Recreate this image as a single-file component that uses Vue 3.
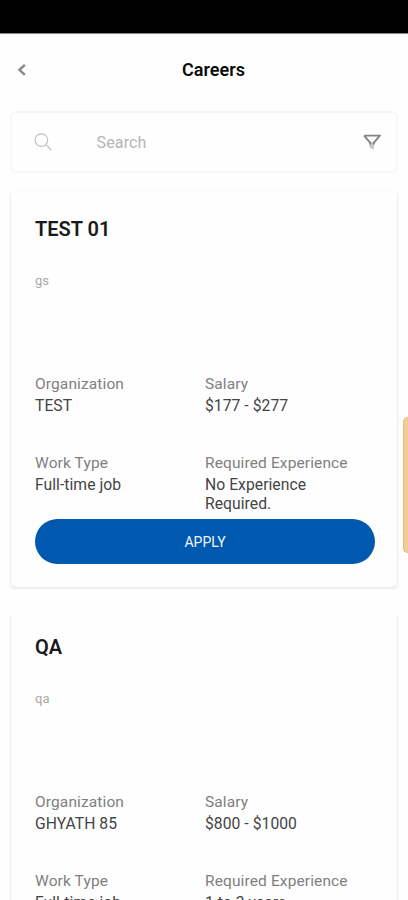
<script setup>
const jobs = [
  { title: 'TEST 01', description: 'gs', organization: 'TEST', salary: '$177 - $277', type: 'Full-time job', experience: 'No Experience Required.' },
  { title: 'QA', description: 'qa', organization: 'GHYATH 85', salary: '$800 - $1000', type: 'Full-time job', experience: '1 to 3 years' },
]
</script>

<template>
  <main class="screen">
    <div class="status-bar"></div>
    <header class="header">
      <svg class="back" viewBox="0 0 10 14"><path d="M7.9 1.8 2.4 6.8l5.5 5" /></svg>
      <h1>Careers</h1>
    </header>
    <div class="search">
      <svg class="magnifier" viewBox="0 0 20 20"><circle cx="7.4" cy="8.1" r="6.3" /><path d="m12 12.7 5.3 5.3" /></svg>
      <span class="placeholder">Search</span>
      <svg class="filter" viewBox="0 0 18 16">
        <path class="stem" d="M6.4 8v5.2l4.6 2.6V8Z" />
        <path class="funnel" d="M1.1 1.6h15.8L10.9 8.6v1.8M1.1 1.6l6 7v1.8" />
      </svg>
    </div>
    <section class="list">
      <article v-for="job in jobs" :key="job.title" class="card">
        <h2>{{ job.title }}</h2>
        <p class="description">{{ job.description }}</p>
        <dl class="details">
          <div><dt>Organization</dt><dd>{{ job.organization }}</dd></div>
          <div><dt>Salary</dt><dd>{{ job.salary }}</dd></div>
          <div><dt>Work Type</dt><dd>{{ job.type }}</dd></div>
          <div><dt>Required Experience</dt><dd class="experience">{{ job.experience }}</dd></div>
        </dl>
        <button class="apply">APPLY</button>
      </article>
    </section>
    <div class="edge-handle"></div>
  </main>
</template>

<style>
body {
  margin: 0;
  background: #fefefe;
}
</style>

<style scoped>
.screen {
  position: relative;
  box-sizing: border-box;
  width: 408px;
  height: 900px;
  overflow: hidden;
  background: #fefefe;
  font-family: Roboto, sans-serif;
}
.status-bar {
  height: 33px;
  background: #000;
  border-bottom: 1px solid #888;
}
.header {
  display: grid;
  grid-template-columns: 59px 1fr 40px;
  align-items: center;
  height: 72px;
  margin-bottom: 5px;
}
.back {
  width: 10px;
  height: 14px;
  margin-left: 17px;
  fill: none;
  stroke: #888;
  stroke-width: 2.4;
}
h1 {
  margin: 0;
  text-align: center;
  font-size: 18px;
  line-height: 24px;
  font-weight: 600;
  color: #0b0b0b;
}
.search {
  box-sizing: border-box;
  display: flex;
  align-items: center;
  height: 62px;
  margin: 0 10px;
  padding: 0 15.5px 0 22px;
  border: 2px solid #f7f7f7;
  border-radius: 6px;
}
.magnifier {
  width: 20px;
  height: 20px;
  fill: none;
  stroke: #c2c2c2;
  stroke-width: 1.2;
}
.placeholder {
  flex: 1;
  margin-left: 42.5px;
  font-size: 16px;
  letter-spacing: 0.15px;
  color: #b5b5b5;
}
.filter {
  width: 18px;
  height: 16px;
  fill: none;
}
.funnel {
  stroke: #858585;
  stroke-width: 1.9;
}
.stem {
  fill: #c4c4c4;
}
.list {
  display: flex;
  flex-direction: column;
  gap: 22px;
  padding: 18px 11px 0;
}
.card {
  box-sizing: border-box;
  flex: none;
  height: 396px;
  padding: 24px 23px 0 24px;
  border-radius: 5px;
  background: #fefefe;
  box-shadow: 0 1px 2px 1px #ebebeb;
}
.card + .card {
  box-shadow: 0 4px 2px 1px #ebebeb;
}
h2 {
  margin: 0;
  font-size: 20px;
  line-height: 28px;
  font-weight: 600;
  color: #1a1a1a;
}
.description {
  height: 93px;
  margin: 28px 0 0;
  font-size: 13px;
  line-height: 20px;
  color: #aaa;
}
.details {
  display: grid;
  grid-template-columns: 170px 1fr;
  grid-template-rows: 79px 76px;
  margin: 10px 0 0;
  font-size: 15.5px;
  letter-spacing: 0.12px;
}
dt {
  height: 22px;
  line-height: 20px;
  color: #808080;
}
dd {
  margin: 0;
  font-size: 15.7px;
  line-height: 19px;
  letter-spacing: 0.04px;
  color: #444;
}
.experience {
  max-width: 120px;
}
.apply {
  display: block;
  width: 340px;
  height: 45px;
  margin-top: -10px;
  padding: 0;
  border: 0;
  border-radius: 23px;
  background: #0058af;
  color: #f0f7ff;
  font: 400 14px/46px Roboto, sans-serif;
}
.edge-handle {
  position: absolute;
  top: 417px;
  right: 0;
  width: 5px;
  height: 136px;
  box-sizing: border-box;
  border: 1px solid #dfbd85;
  border-right: 0;
  border-radius: 5px 0 0 5px;
  background: #f1ce94;
}
</style>
